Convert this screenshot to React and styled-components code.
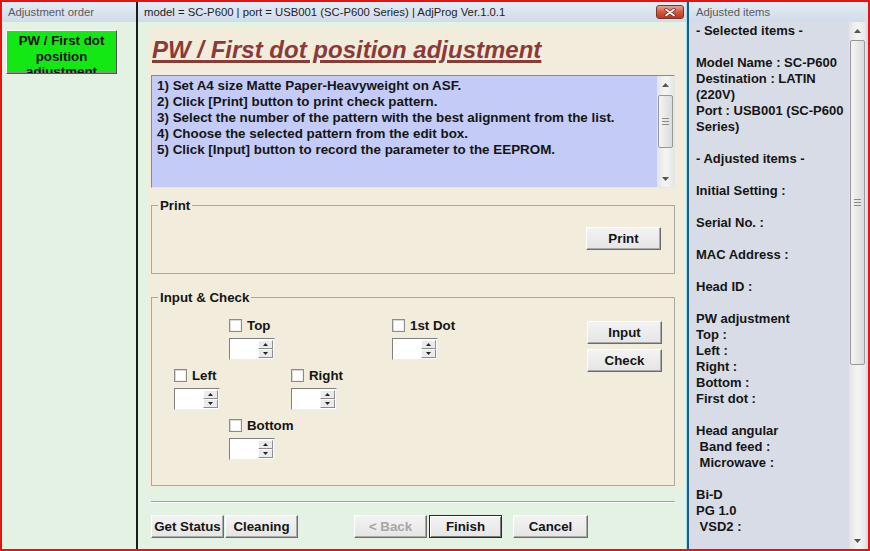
import React from 'react';
import styled, { createGlobalStyle } from 'styled-components';

const GlobalStyle = createGlobalStyle`
  html, body { margin: 0; padding: 0; background: #ffffff; }
  body { font-family: "Liberation Sans", Arial, sans-serif; }
  * { box-sizing: border-box; }
`;

const Frame = styled.div`
  width: 870px;
  height: 551px;
  border: 2px solid #e81212;
  display: flex;
  overflow: hidden;
`;

const Pane = styled.div`
  width: ${({ $w }) => $w}px;
  flex: none;
  display: flex;
  flex-direction: column;
  background: ${({ $bg }) => $bg};
`;

const DarkDivider = styled.div`
  width: 2px;
  flex: none;
  background: #1c1c1c;
`;

const BlueDivider = styled.div`
  width: 3px;
  flex: none;
  background: linear-gradient(90deg, #a8e0ee 0 1px, #1d5a86 1px);
`;

const PaneHeader = styled.div`
  height: 20px;
  flex: none;
  display: flex;
  align-items: center;
  justify-content: space-between;
  padding: 0 2px 0 ${({ $pad }) => $pad || 6}px;
  background: linear-gradient(#e4ecf5, #d0dce9);
  color: ${({ $dark }) => ($dark ? '#222' : '#5a5a5a')};
  font: 11.3px "Liberation Sans", Arial, sans-serif;
  white-space: nowrap;
`;

const CloseBox = styled.div`
  width: 28px;
  height: 14px;
  border: 1px solid #7d3326;
  border-radius: 3px;
  background: linear-gradient(#e9a593, #d4553f 50%, #c0361f);
  display: flex;
  align-items: center;
  justify-content: center;
`;

/* left */
const OrderButton = styled.div`
  margin: 8px 0 0 4px;
  width: 111px;
  height: 44px;
  padding-top: 2px;
  overflow: hidden;
  background: #14e814;
  border: 1px solid;
  border-color: #ffffff #555555 #555555 #ffffff;
  box-shadow: inset -1px -1px 0 #8f8f8f;
  text-align: center;
  font: bold 13.3px "Liberation Sans", Arial, sans-serif;
  line-height: 15.5px;
  color: #111;
`;

/* middle */
const Sheet = styled.div`
  margin: 5px 3px 0 10px;
  padding: 9px 8px 1px 3px;
  background: #f1ecdb;
  display: flex;
  flex-direction: column;
`;

const Title = styled.div`
  padding-left: 1px;
  height: 28px;
  font: italic bold 24px "Liberation Sans", Arial, sans-serif;
  line-height: 28px;
  color: #8a3b38;
  text-decoration: underline;
  text-decoration-thickness: 3px;
  text-underline-offset: 2px;
  white-space: nowrap;
`;

const DescBox = styled.div`
  margin-top: 11px;
  height: 113px;
  display: flex;
  border: 1px solid;
  border-color: #8a8a8a #e6e6e6 #e6e6e6 #8a8a8a;
  background: #c3cbf6;
`;

const DescText = styled.div`
  flex: 1;
  padding: 2px 4px 0 5px;
  font: bold 13.4px "Liberation Sans", Arial, sans-serif;
  line-height: 16px;
  color: #151515;
  white-space: pre;
  overflow: hidden;
`;

const Track = styled.div`
  width: 17px;
  flex: none;
  display: flex;
  flex-direction: column;
  margin-right: ${({ $gap }) => $gap || 0}px;
  background: linear-gradient(90deg, #e4e4e4, #f3f3f3 45%, #f3f3f3 60%, #e6e6e6);
`;

const ArrowCell = styled.div`
  height: 17px;
  flex: none;
  display: flex;
  align-items: center;
  justify-content: center;
`;

const Thumb = styled.div`
  margin: ${({ $offset }) => $offset}px 1px 0;
  height: ${({ $size }) => $size}px;
  flex: none;
  border: 1px solid #979797;
  border-radius: 2px;
  background: linear-gradient(90deg, #f4f4f4, #dcdcdc);
  display: flex;
  align-items: center;
  justify-content: center;
`;

const TrackRest = styled.div`
  flex: 1;
`;

const Group = styled.fieldset`
  margin: ${({ $top }) => $top}px 0 0;
  height: ${({ $h }) => $h}px;
  padding: ${({ $padTop }) => $padTop}px 13px 0 22px;
  border: 1px solid #a9a9a2;
  min-width: 0;
`;

const Legend = styled.legend`
  margin-left: -16px;
  padding: 0 2px;
  font: bold 13.3px "Liberation Sans", Arial, sans-serif;
  line-height: 15px;
  color: #151515;
`;

const RightAligned = styled.div`
  display: flex;
  justify-content: flex-end;
`;

const WinButton = styled.button`
  width: ${({ $w }) => $w || 75}px;
  height: 23px;
  flex: none;
  padding: 0;
  margin-left: ${({ $ml }) => $ml || 0}px;
  font: bold 13.3px "Liberation Sans", Arial, sans-serif;
  color: ${({ disabled }) => (disabled ? '#a6a6a6' : '#151515')};
  background: linear-gradient(#f3f3f3, #e5e5e5);
  border: 1px solid;
  border-color: ${({ $def }) =>
    $def ? '#2a2a2a' : '#ffffff #6c6c6c #6c6c6c #ffffff'};
  box-shadow: ${({ $def }) =>
    $def
      ? 'inset 1px 1px 0 #ffffff, inset -1px -1px 0 #7a7a7a'
      : 'inset -1px -1px 0 #a9a9a9'};
`;

const CheckGrid = styled.div`
  display: grid;
  grid-template-columns: 55px 62px 101px 195px 74px;
  grid-template-rows: 45px 45px 45px;
  row-gap: 5px;
`;

const Cell = styled.div`
  grid-column: ${({ $col }) => $col};
  grid-row: ${({ $row }) => $row};
`;

const ButtonStack = styled.div`
  grid-column: 5;
  grid-row: 1 / span 2;
  padding-top: 6px;
  display: flex;
  flex-direction: column;
  gap: 5px;
`;

const CheckRow = styled.div`
  height: 20px;
  display: flex;
  align-items: center;
  font: bold 13.3px "Liberation Sans", Arial, sans-serif;
  color: #151515;
  white-space: nowrap;
`;

const Box = styled.span`
  width: 13px;
  height: 13px;
  flex: none;
  margin-right: 5px;
  border: 1px solid #8c8c8c;
  background: #ffffff;
  box-shadow: inset 1px 1px 0 #d9d9d9, inset -1px -1px 0 #f0f0f0;
`;

const Spin = styled.div`
  margin-top: 3px;
  width: 46px;
  height: 22px;
  display: flex;
  border: 1px solid;
  border-color: #808080 #ededed #ededed #808080;
  background: #ffffff;
`;

const SpinField = styled.div`
  flex: 1;
`;

const SpinButtons = styled.div`
  width: 16px;
  display: flex;
  flex-direction: column;
  padding: 1px 1px 1px 0;
`;

const SpinHalf = styled.div`
  flex: 1;
  background: #ebebeb;
  border: 1px solid;
  border-color: #ffffff #8e8e8e #8e8e8e #ffffff;
  display: flex;
  align-items: center;
  justify-content: center;
`;

const Rule = styled.div`
  margin: 14px 11px 0 13px;
  height: 2px;
  border-top: 1px solid #a3a3a3;
  border-bottom: 1px solid #ffffff;
`;

const BottomBar = styled.div`
  margin-top: 12px;
  padding-left: 13px;
  display: flex;
  align-items: center;
`;

/* right */
const RightBody = styled.div`
  flex: 1;
  display: flex;
  min-height: 0;
`;

const RightText = styled.div`
  flex: 1;
  padding: 1px 0 0 7px;
  font: bold 13px "Liberation Sans", Arial, sans-serif;
  line-height: 16px;
  color: #151515;
  white-space: pre;
  overflow: hidden;
`;

const UpArrow = () => (
  <svg width="7" height="4" viewBox="0 0 7 4">
    <path d="M0 4 L3.5 0 L7 4 Z" fill="#555" />
  </svg>
);

const DownArrow = () => (
  <svg width="7" height="4" viewBox="0 0 7 4">
    <path d="M0 0 L3.5 4 L7 0 Z" fill="#555" />
  </svg>
);

const Grip = () => (
  <svg width="7" height="7" viewBox="0 0 7 7">
    <path d="M0 0.5 H7 M0 3.5 H7 M0 6.5 H7" stroke="#8a8a8a" strokeWidth="1" />
  </svg>
);

const TinyUp = () => (
  <svg width="5" height="3" viewBox="0 0 5 3">
    <path d="M0 3 L2.5 0 L5 3 Z" fill="#222" />
  </svg>
);

const TinyDown = () => (
  <svg width="5" height="3" viewBox="0 0 5 3">
    <path d="M0 0 L2.5 3 L5 0 Z" fill="#222" />
  </svg>
);

const ScrollBar = ({ offset, size, gap }) => (
  <Track $gap={gap}>
    <ArrowCell>
      <UpArrow />
    </ArrowCell>
    <Thumb $offset={offset} $size={size}>
      <Grip />
    </Thumb>
    <TrackRest />
    <ArrowCell>
      <DownArrow />
    </ArrowCell>
  </Track>
);

const Spinner = () => (
  <Spin>
    <SpinField />
    <SpinButtons>
      <SpinHalf>
        <TinyUp />
      </SpinHalf>
      <SpinHalf>
        <TinyDown />
      </SpinHalf>
    </SpinButtons>
  </Spin>
);

const CheckSpin = ({ label, col, row }) => (
  <Cell $col={col} $row={row}>
    <CheckRow>
      <Box />
      {label}
    </CheckRow>
    <Spinner />
  </Cell>
);

const steps = [
  '1) Set A4 size Matte Paper-Heavyweight on ASF.',
  '2) Click [Print] button to print check pattern.',
  '3) Select the number of the pattern with the best alignment from the list.',
  '4) Choose the selected pattern from the edit box.',
  '5) Click [Input] button to record the parameter to the EEPROM.',
];

const adjusted = [
  '- Selected items -',
  '',
  'Model Name : SC-P600',
  'Destination : LATIN',
  '(220V)',
  'Port : USB001 (SC-P600',
  'Series)',
  '',
  '- Adjusted items -',
  '',
  'Initial Setting :',
  '',
  'Serial No. :',
  '',
  'MAC Address :',
  '',
  'Head ID :',
  '',
  'PW adjustment',
  'Top :',
  'Left :',
  'Right :',
  'Bottom :',
  'First dot :',
  '',
  'Head angular',
  ' Band feed :',
  ' Microwave :',
  '',
  'Bi-D',
  'PG 1.0',
  ' VSD2 :',
];

const App = () => (
  <>
    <GlobalStyle />
    <Frame>
      <Pane $w={134} $bg="#e3f2e2">
        <PaneHeader>Adjustment order</PaneHeader>
        <OrderButton>
          PW / First dot
          <br />
          position
          <br />
          adjustment
        </OrderButton>
      </Pane>
      <DarkDivider />
      <Pane $w={548} $bg="#e3f2e2">
        <PaneHeader $pad={6} $dark>
          <span>model = SC-P600 | port = USB001 (SC-P600 Series) | AdjProg Ver.1.0.1</span>
          <CloseBox>
            <svg width="12" height="9" viewBox="0 0 12 9">
              <path d="M2 1.5 L10 7.5 M10 1.5 L2 7.5" stroke="#6b2418" strokeWidth="3.2" strokeLinecap="round" />
              <path d="M2 1.5 L10 7.5 M10 1.5 L2 7.5" stroke="#ffffff" strokeWidth="1.8" strokeLinecap="round" />
            </svg>
          </CloseBox>
        </PaneHeader>
        <Sheet>
          <Title>PW / First dot position adjustment</Title>
          <DescBox>
            <DescText>{steps.join('\n')}</DescText>
            <ScrollBar offset={2} size={53} />
          </DescBox>
          <Group $top={10} $h={76} $padTop={14}>
            <Legend>Print</Legend>
            <RightAligned>
              <WinButton>Print</WinButton>
            </RightAligned>
          </Group>
          <Group $top={16} $h={196} $padTop={10}>
            <Legend>Input &amp; Check</Legend>
            <CheckGrid>
              <CheckSpin label="Top" col={2} row={1} />
              <CheckSpin label="1st Dot" col={4} row={1} />
              <CheckSpin label="Left" col={1} row={2} />
              <CheckSpin label="Right" col={3} row={2} />
              <CheckSpin label="Bottom" col={2} row={3} />
              <ButtonStack>
                <WinButton>Input</WinButton>
                <WinButton>Check</WinButton>
              </ButtonStack>
            </CheckGrid>
          </Group>
        </Sheet>
        <Rule />
        <BottomBar>
          <WinButton $w={73}>Get Status</WinButton>
          <WinButton $w={73} $ml={1}>Cleaning</WinButton>
          <WinButton $w={73} $ml={56} disabled>
            &lt; Back
          </WinButton>
          <WinButton $w={73} $ml={2} $def>
            Finish
          </WinButton>
          <WinButton $w={75} $ml={11}>Cancel</WinButton>
        </BottomBar>
      </Pane>
      <BlueDivider />
      <Pane $w={179} $bg="#d8dce6">
        <PaneHeader $pad={7}>Adjusted items</PaneHeader>
        <RightBody>
          <RightText>{adjusted.join('\n')}</RightText>
          <ScrollBar offset={1} size={325} gap={2} />
        </RightBody>
      </Pane>
    </Frame>
  </>
);

export default App;
